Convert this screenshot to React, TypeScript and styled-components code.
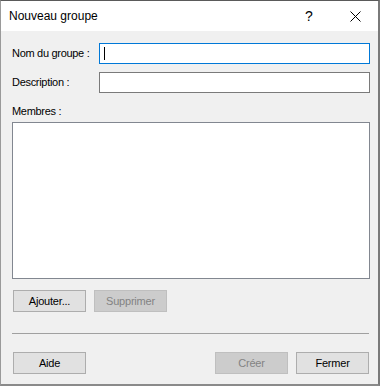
import React from 'react';
import styled, { createGlobalStyle } from 'styled-components';

const GlobalStyle = createGlobalStyle`
  html, body {
    margin: 0;
    padding: 0;
    background: #f0f0f0;
  }
  * {
    box-sizing: border-box;
  }
`;

const Window = styled.div`
  width: 380px;
  height: 386px;
  display: flex;
  flex-direction: column;
  background: #f0f0f0;
  border-top: 1px solid #5a5a5a;
  border-left: 1px solid #9a9a9a;
  border-right: 2px solid #7a7a7a;
  border-bottom: 2px solid #8a8a8a;
  font-family: "Liberation Sans", Arial, sans-serif;
  color: #000;
`;

const TitleBar = styled.div`
  height: 30px;
  flex: none;
  display: flex;
  align-items: center;
  background: #fff;
  padding-left: 8px;
`;

const Title = styled.div`
  flex: 1;
  font-size: 12px;
  padding-bottom: 1px;
`;

const TitleButton = styled.div<{ $width: number }>`
  width: ${({ $width }) => $width}px;
  height: 30px;
  display: flex;
  align-items: center;
  justify-content: center;
  font-size: 14px;
`;

const Body = styled.div`
  flex: 1;
  display: flex;
  flex-direction: column;
  padding: 12px 8px 0 11px;
`;

const FieldGrid = styled.div`
  display: grid;
  grid-template-columns: 87px 1fr;
  row-gap: 8px;
  align-items: center;
`;

const Label = styled.div`
  font-size: 11px;
  letter-spacing: -0.3px;
  padding-bottom: 1px;
`;

const TextBox = styled.div<{ $focused?: boolean }>`
  height: 21px;
  background: #fff;
  border: 1px solid ${({ $focused }) => ($focused ? '#0078d7' : '#7a7a7a')};
  display: flex;
  align-items: center;
  padding-left: 4px;
`;

const Caret = styled.div`
  width: 1px;
  height: 13px;
  background: #000;
`;

const MembersLabel = styled(Label)`
  margin-top: 12px;
`;

const ListBox = styled.div`
  margin-top: 4px;
  height: 157px;
  background: #fff;
  border: 1px solid #828790;
`;

const ButtonRow = styled.div`
  display: flex;
  gap: 8px;
  padding-left: 1px;
`;

const ListButtons = styled(ButtonRow)`
  margin-top: 11px;
`;

const FooterButtons = styled(ButtonRow)`
  margin-top: 18px;
  padding-right: 1px;
`;

const Spacer = styled.div`
  flex: 1;
`;

const Button = styled.button<{ $disabled?: boolean }>`
  width: 73px;
  height: 22px;
  padding: 0;
  font-family: inherit;
  font-size: 11px;
  letter-spacing: -0.2px;
  background: ${({ $disabled }) => ($disabled ? '#cccccc' : '#e1e1e1')};
  border: 1px solid ${({ $disabled }) => ($disabled ? '#bfbfbf' : '#adadad')};
  color: ${({ $disabled }) => ($disabled ? '#838383' : '#000')};
  border-radius: 0;
`;

const Separator = styled.div`
  margin-top: 21px;
  height: 1px;
  background: #a0a0a0;
  margin-right: 1px;
`;

export default function App() {
  return (
    <>
      <GlobalStyle />
      <Window>
        <TitleBar>
          <Title>Nouveau groupe</Title>
          <TitleButton $width={46}>?</TitleButton>
          <TitleButton $width={46}>
            <svg width="11" height="11" viewBox="0 0 11 11">
              <path d="M0.5 0.5 L10.5 10.5 M10.5 0.5 L0.5 10.5" stroke="#000" strokeWidth="1" />
            </svg>
          </TitleButton>
        </TitleBar>
        <Body>
          <FieldGrid>
            <Label>Nom du groupe :</Label>
            <TextBox $focused>
              <Caret />
            </TextBox>
            <Label>Description :</Label>
            <TextBox />
          </FieldGrid>
          <MembersLabel>Membres :</MembersLabel>
          <ListBox />
          <ListButtons>
            <Button>Ajouter...</Button>
            <Button $disabled>Supprimer</Button>
          </ListButtons>
          <Separator />
          <FooterButtons>
            <Button>Aide</Button>
            <Spacer />
            <Button $disabled>Créer</Button>
            <Button>Fermer</Button>
          </FooterButtons>
        </Body>
      </Window>
    </>
  );
}
